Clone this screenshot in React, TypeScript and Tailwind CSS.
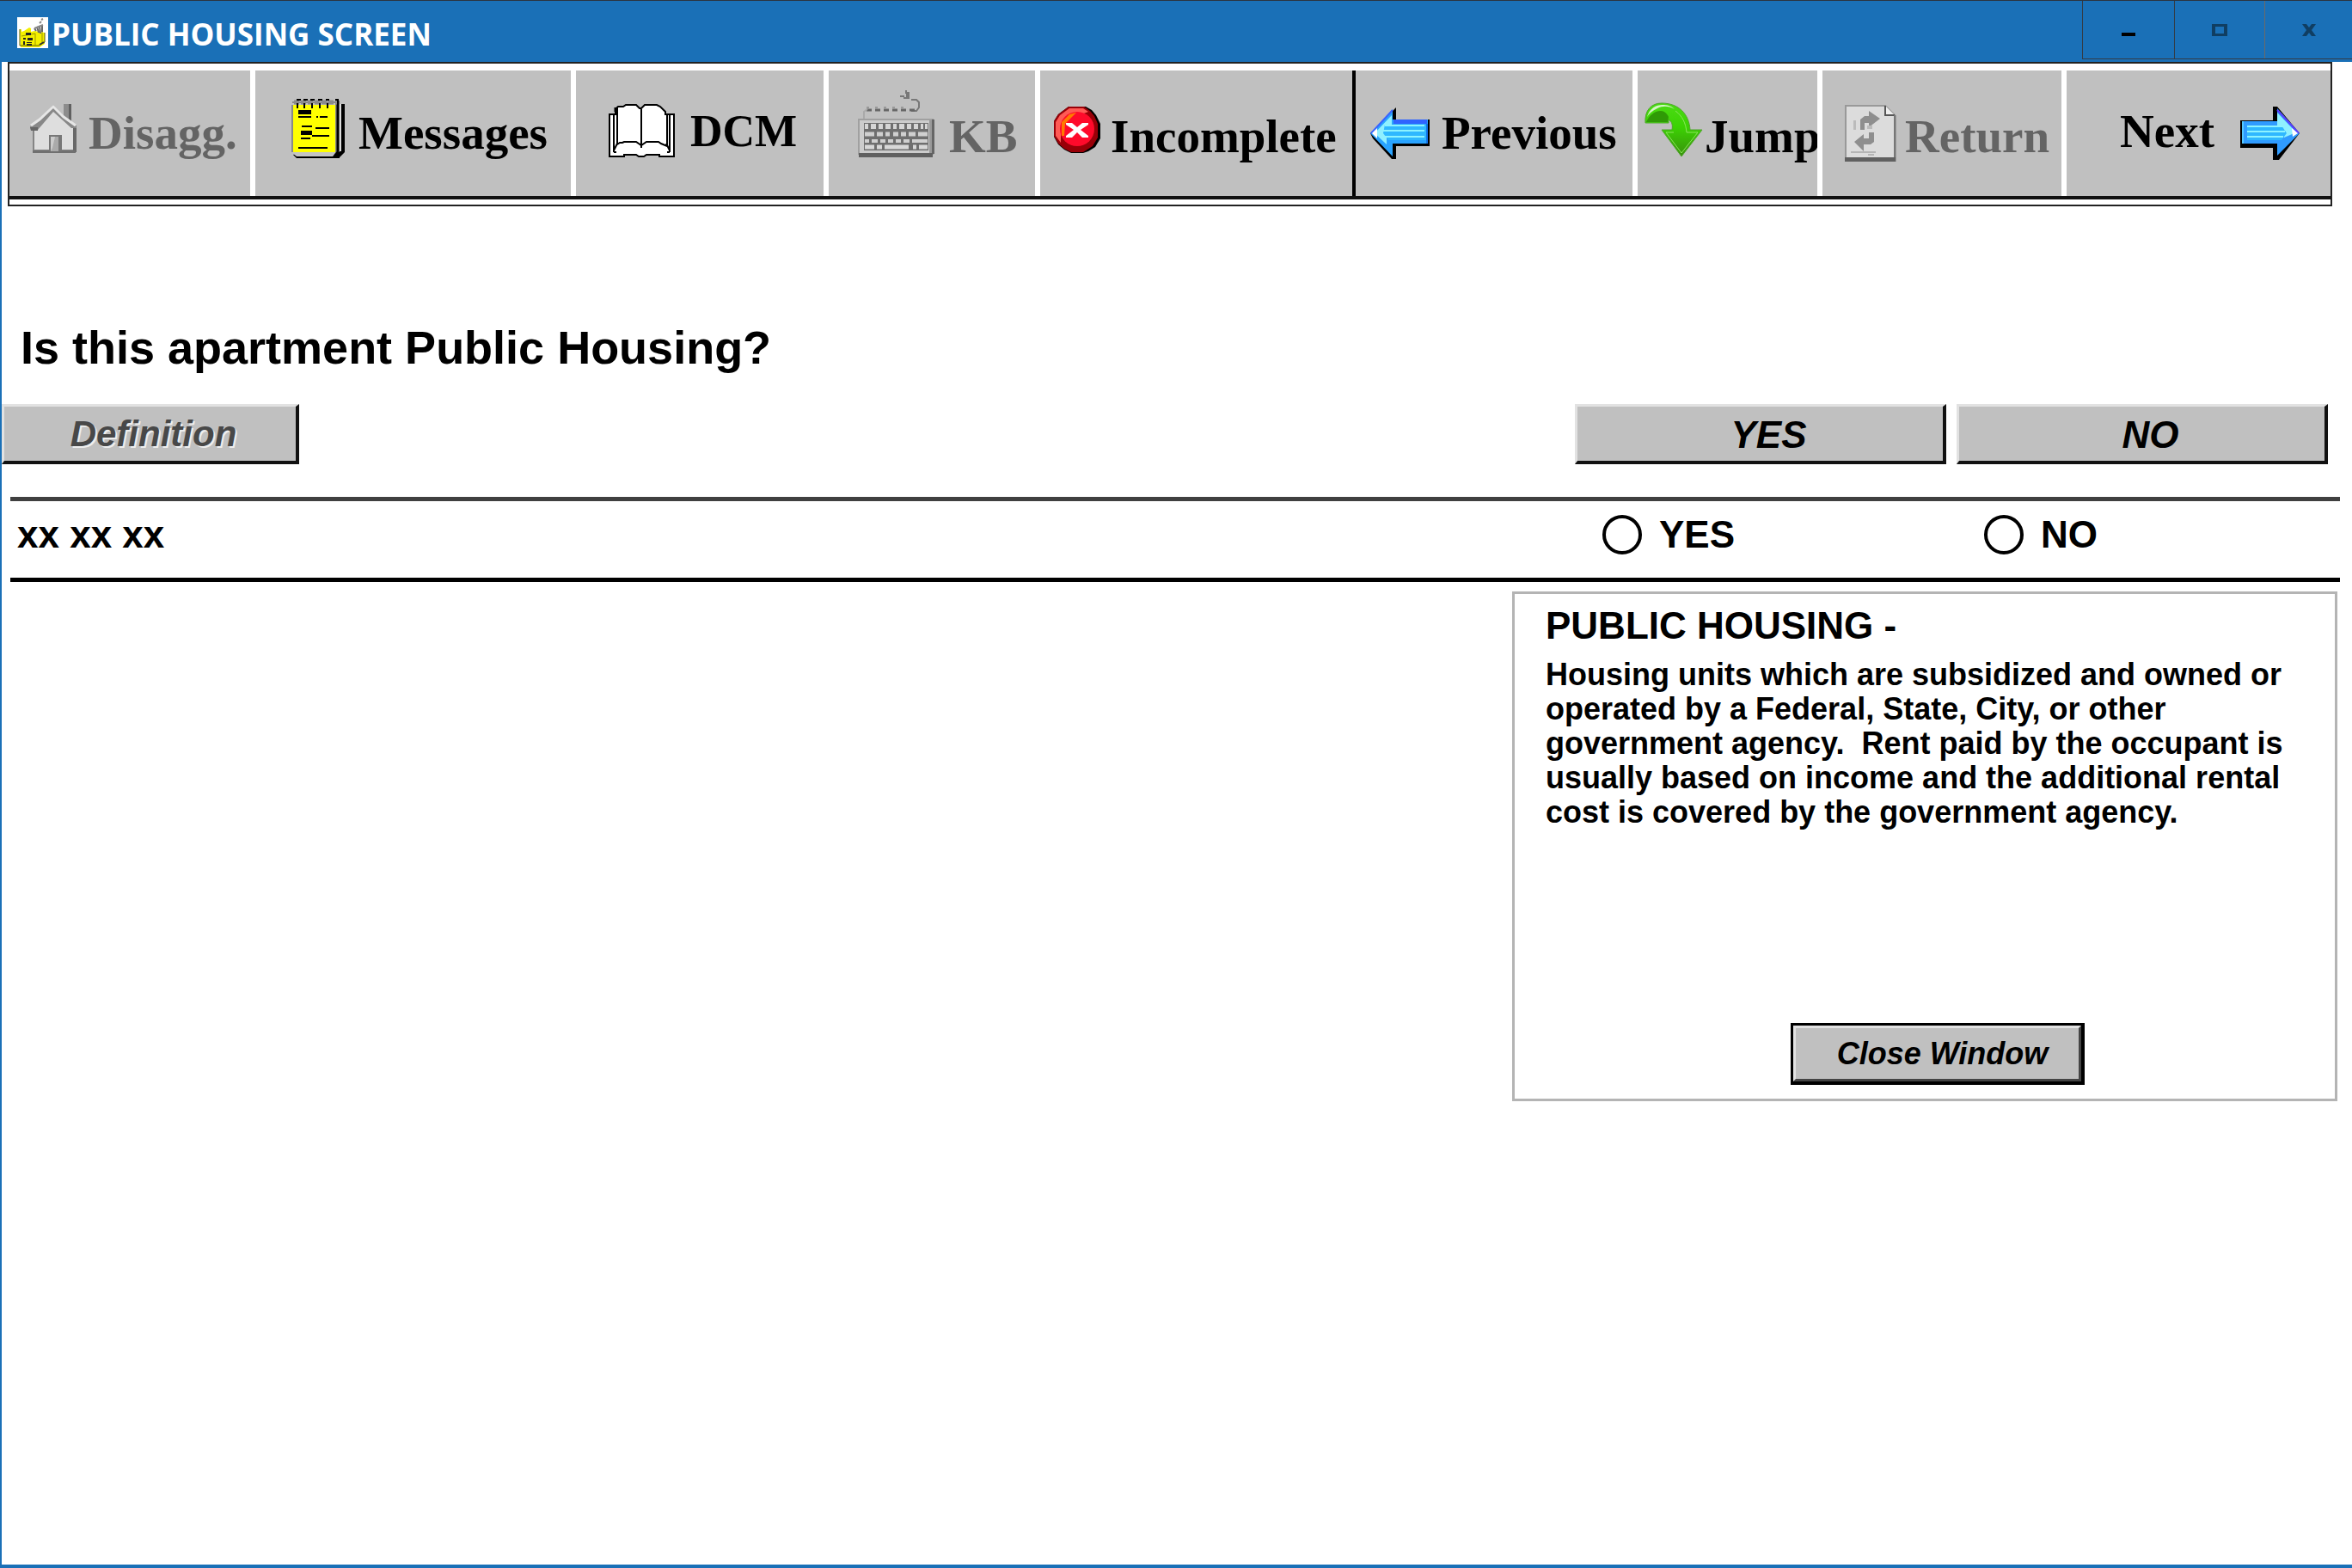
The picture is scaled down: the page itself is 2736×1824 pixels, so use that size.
import React from 'react'

function FactoryIcon() {
  return (
    <svg width="36" height="36" viewBox="0 0 36 36" aria-hidden="true">
      <rect width="36" height="36" fill="#fff" />
      <path d="M3 14h2v3l3-1 6-4 2 1v4l4-1 12 2v13l-6 4H4z" fill="#f4f000" />
      <path d="M3 14v19h22l7-4V18" fill="none" stroke="#5c5a00" strokeWidth="1" />
      <path d="M21 19v14M29 17v13M5 22l16-3" fill="none" stroke="#9a9600" strokeWidth="1" />
      <path d="M10 18h6v3h-6zM7 24h3v2H7zM12 24h6v3h-6zM7 28h2v4H7zM11 29h6v1h-6zM11 31h6v2h-6z" fill="#222" />
      <path d="M20 13l2 3M23 11l2 7M26 10l1 9M29 9v8" fill="none" stroke="#666" strokeWidth="2" />
      <path d="M20 13l5-2 5-2M26 7l2-2M28 3l2-1" fill="none" stroke="#888" strokeWidth="2" />
      <path d="M26 32l5-3" stroke="#333" strokeWidth="2" />
    </svg>
  )
}

function HouseIcon() {
  return (
    <svg className="mb-3 shrink-0" width="56" height="58" viewBox="0 0 56 58" aria-hidden="true">
      <path d="M39 1h8v23l-8-8z" fill="#8c8c8c" />
      <path d="M45 1h3v24l-3-3z" fill="#606060" />
      <path d="M4 30L27 8l24 22v25H4z" fill="#dedede" />
      <path d="M4 30v26M4 55h46" stroke="#858585" strokeWidth="2" />
      <path d="M50 28h4v29h-4z" fill="#686868" />
      <path d="M3 55h50v3H3z" fill="#707070" />
      <path d="M0 27L10 20 27 2l13 13 14 11v3h-6L27 10 9 31H1z" fill="#888" />
      <path d="M1 26L11 19 27 4l12 12 14 10" fill="none" stroke="#e6e6e6" strokeWidth="3" />
      <path d="M0 28h9v4H1z" fill="#666" />
      <path d="M22 37h15v19H22z" fill="#777" />
      <path d="M24 39h9v17h-9z" fill="#aaa" />
      <path d="M24 39h5l-3 13-2 4z" fill="#ccc" />
    </svg>
  )
}

function NotepadIcon() {
  return (
    <svg className="mb-3 shrink-0" width="62" height="70" viewBox="0 0 62 70" aria-hidden="true">
      <path d="M8 63h48V7h6v56l-6 6v1H6l-4-4z" fill="#000" />
      <path d="M1 5h51v58l-4 5H6l-5-4z" fill="#c4c4c4" />
      <path d="M1 5h51v62" fill="none" stroke="#888" strokeWidth="2" />
      <path d="M54 3v60l-3 4" fill="none" stroke="#000" strokeWidth="3" />
      <path d="M57 7v55" stroke="#ddd" strokeWidth="2" />
      <path d="M1 8h50v55H1z" fill="#ff0" />
      <path d="M1 8v55" stroke="#888" strokeWidth="2" />
      <path d="M3 5h50" stroke="#8a8a8a" strokeWidth="5" strokeDasharray="6 2" />
      <path d="M6 2h5M14 2h5M22 2h5M31 2h5M40 2h4M51 2h4M7 6v6M15 6v6M24 6v6M33 6v6M42 6v6" stroke="#000" strokeWidth="2" />
      <path d="M8 14h15v5H8zM8 21h15v2H8zM29 21h2v2h-2zM33 21h9v2h-9zM12 32h12v2H12zM28 34h16v2H28zM11 38h13v5H11zM24 43h20v2H24zM11 46h11v2H11zM8 57h34v2H8z" fill="#000" />
    </svg>
  )
}

function BookIcon() {
  return (
    <svg className="mb-1 shrink-0" width="77" height="64" viewBox="0 0 77 64" aria-hidden="true">
      <path d="M1 12h7V6l3-3h6l3-2h12l4 4h2l4-4h14l4 2 6 6v3h10v49H59v-2H44l-3 2h-6l-3-2H18v2H1z" fill="#fff" stroke="#000" strokeWidth="2" />
      <path d="M10 4v43l3-2h3l2-1h14l6 4 6-4h14l3 2 7 3V11M38 6v45M6 13v43M71 13v43M6 54l4-8M71 54l-4-8M6 56h3M68 56h3" fill="none" stroke="#000" strokeWidth="2" />
      <path d="M8 4v5" stroke="#000" strokeWidth="3" />
    </svg>
  )
}

function KeyboardIcon() {
  return (
    <svg className="mb-6 shrink-0" width="90" height="79" viewBox="0 0 90 79" aria-hidden="true">
      <path d="M56 1v4M49 8h5M62 12h6l3 3v6l-3 4h-6" fill="none" stroke="#777" strokeWidth="2" />
      <path d="M56 3h4v8h-7v-2h3z" fill="#777" />
      <path d="M10 24h56" stroke="#666" strokeWidth="3" strokeDasharray="6 4" />
      <path d="M10 21h50" stroke="#999" strokeWidth="2" strokeDasharray="3 7" />
      <path d="M7 34v-8l4-3" fill="none" stroke="#aaa" strokeWidth="2" />
      <path d="M1 35h86v40H1z" fill="#ccc" stroke="#a0a0a0" strokeWidth="2" />
      <path d="M83 36h3v39h-3z" fill="#999" />
      <path d="M86 35h3v40h-3z" fill="#666" />
      <path d="M1 74h86v5H1z" fill="#606060" />
      <path d="M7 39h75v32H7z" fill="#6f6f6f" />
      <path d="M8 43h4M15 43h6M24 43h5M32 43h6M41 43h4M48 43h6M57 43h5M65 43h5M73 43h3M78 43h3" stroke="#d6d6d6" strokeWidth="6" />
      <path d="M8 52h11M22 52h7M32 52h5M41 52h6M50 52h6M59 52h8M70 52h11" stroke="#d0d0d0" strokeWidth="5" />
      <path d="M8 60h5M16 60h7M26 60h6M35 60h6M44 60h6M53 60h7M63 60h18" stroke="#d0d0d0" strokeWidth="4" />
      <path d="M8 67h11M22 67h6M31 67h28M64 67h4M71 67h10" stroke="#d8d8d8" strokeWidth="5" />
    </svg>
  )
}

function ErrorIcon() {
  return (
    <svg className="mb-2 shrink-0" width="54" height="54" viewBox="0 0 54 54" aria-hidden="true">
      <path d="M17 0h20l7 4 5 6 5 10v17l-6 10-8 5-6 2H20l-8-4-7-6-5-9V17L5 9z" fill="#000" />
      <path d="M17 0h18l7 5 5 6 4 9v16l-6 10-11 7H20l-8-4-7-6-5-9V17L5 9z" fill="#990008" />
      <path d="M18 2h16l6 4-8 3H20L8 20v22l-6-8V18l5-8z" fill="#ff5a55" />
      <circle cx="27" cy="26" r="20" fill="#ff0a2b" />
      <path d="M9 34V18l9-9 8-2-5 5-8 8-1 14z" fill="#ff7a00" />
      <path d="M14 19h7l6 5 6-5h7v2l-9 6 9 7v2h-7l-6-6-6 6h-7v-2l9-7-9-6z" fill="#fff" />
    </svg>
  )
}

function ArrowLeftIcon() {
  return (
    <svg className="shrink-0" width="70" height="60" viewBox="0 0 70 60" aria-hidden="true">
      <path d="M31 0v14h39v31H31v15h-5L4 36 1 30z" fill="#000" />
      <path d="M27 2L1 30l26 27V42h41V14H27z" fill="#29a3ff" />
      <path d="M27 3L2 30" stroke="#3a62ff" strokeWidth="2" />
      <path d="M28 14h39v5H28z" fill="#2f63ff" />
      <path d="M26 9L6 30l14 13V24l6-4z" fill="#8ff0ff" />
      <path d="M3 30l6-6v12z" fill="#fff" />
      <path d="M18 20h48v18H22l-6-8z" fill="#2fb8ff" />
      <path d="M18 21h46M16 27h48M18 34h46" stroke="#8df3ff" strokeWidth="2" />
      <path d="M66 19h2v23h-2z" fill="#1273e8" />
    </svg>
  )
}

function ArrowRightIcon() {
  return (
    <svg className="shrink-0" width="70" height="62" viewBox="0 0 70 62" aria-hidden="true">
      <path d="M38 0h5l26 31-24 31h-7V48H0V16h38z" fill="#000" />
      <path d="M43 2l26 29-26 26V43H2V17h41z" fill="#2f9bff" />
      <path d="M43 4l25 27" stroke="#5a3cff" strokeWidth="2" />
      <path d="M43 7l22 23-14 6-8-14z" fill="#8ff0ff" />
      <path d="M60 25l7 6-6 4z" fill="#fff" />
      <path d="M8 22h40l6 9-6 8H8z" fill="#2fb8ff" />
      <path d="M8 23h42M8 29h44M8 35h42" stroke="#8df3ff" strokeWidth="2" />
      <path d="M2 17h2v26H2z" fill="#55c8ff" />
    </svg>
  )
}

function JumpIcon() {
  return (
    <svg className="mb-2 shrink-0" width="68" height="64" viewBox="0 0 68 64" aria-hidden="true">
      <defs>
        <linearGradient id="jumpBody" x1="0" y1="0" x2="0" y2="1">
          <stop offset="0" stopColor="#4bdc14" />
          <stop offset="0.45" stopColor="#3cd203" />
          <stop offset="1" stopColor="#38900c" />
        </linearGradient>
      </defs>
      <path d="M1 24C0 9 8 1 20 1c20 0 32 13 33 31h14L43 63 20 32h12c1-6 0-9-4-12v4z" fill="url(#jumpBody)" stroke="#4fa52c" strokeWidth="1" />
      <path d="M2 23c3-7 9-13 17-13 4 0 7 3 9 7l-1 6z" fill="#2f9a06" />
      <path d="M3 17C6 7 13 3 21 3c5 0 10 1 14 5-7-4-14-4-20-1C9 10 5 13 3 17z" fill="#d4f5c4" />
      <path d="M36 10c8 6 12 14 13 25h13L43 59 25 35h9" fill="none" stroke="#8be55c" strokeWidth="1" />
    </svg>
  )
}

function ReturnIcon() {
  return (
    <svg className="shrink-0" width="60" height="66" viewBox="0 0 60 66" aria-hidden="true">
      <path d="M1 1h46l12 12v52H1z" fill="#dcdcdc" stroke="#999" strokeWidth="2" />
      <path d="M47 1v11h11" fill="#eee" stroke="#555" strokeWidth="2" />
      <path d="M57 12h2v49h-2z" fill="#777" />
      <path d="M0 61h59v5H0z" fill="#606060" />
      <path d="M28 7l13 9-13 10v-5h-5v8h-5V17l5-4h5z" fill="#8e8e8e" />
      <path d="M10 18h3v11h-3zM26 24h6v4h-6z" fill="#bbb" />
      <path d="M28 32h6v11l-4 3h-8v8L11 43l11-9v5h6z" fill="#8e8e8e" />
      <path d="M7 55h29M27 58h7" stroke="#b4b4b4" strokeWidth="2" />
    </svg>
  )
}

const toolButton = 'flex items-center overflow-hidden whitespace-nowrap bg-[#c0c0c0] text-black disabled:text-[#646464]'
const bevel = 'border-t-3 border-l-3 border-r-4 border-b-4 border-t-[#e2e2e2] border-l-[#e2e2e2] border-r-[#111111] border-b-[#111111] bg-[#c0c0c0] font-bold italic'

export default function App() {
  return (
    <div className="flex min-h-screen flex-col border-b-4 border-l-2 border-[#1a70b7] bg-white font-['Liberation_Sans',Arial,sans-serif] text-black">
      <header className="-ml-[2px] flex h-[72px] items-start border-t border-[#2b3440] bg-[#1a70b7]">
        <div className="flex items-center gap-1 pt-[17px] pl-5">
          <FactoryIcon />
          <h1 className="pt-1 font-['Open_Sans','Noto_Sans',sans-serif] text-[35px] leading-[36px] font-bold text-white">PUBLIC HOUSING SCREEN</h1>
        </div>
        <div className="ml-auto flex h-[68px] border-b border-[#333c46]">
          <button aria-label="Minimize" className="flex w-[107px] items-center justify-center border-l border-[#333c46]">
            <svg width="16" height="14" viewBox="0 0 16 14"><path d="M0 10h16v4H0z" fill="#000" /></svg>
          </button>
          <button aria-label="Maximize" className="flex w-[105px] items-center justify-center border-l border-[#333c46]">
            <svg width="18" height="14" viewBox="0 0 18 14"><path d="M0 0h18v14H0zM4 3v8h10V3z" fill="#103e62" fillRule="evenodd" /></svg>
          </button>
          <button aria-label="Close" className="flex w-[102px] items-center justify-center border-l border-[#6a6a6a]">
            <svg width="16" height="14" viewBox="0 0 16 14"><path d="M0 0h5l3 4 3-4h5l-5 7 5 7h-5l-3-4-3 4H0l5-7z" fill="#103e62" /></svg>
          </button>
        </div>
      </header>

      <nav className="mr-[23px] ml-[7px] border-2 border-[#222222] pt-2 pb-[6px]">
        <div className="grid h-[150px] grid-cols-[286fr_373fr_294fr_246fr_367fr_328fr_215fr_284fr_307fr] border-b-4 border-[#111111] font-['Liberation_Serif','Times_New_Roman',serif] text-[55px] leading-[60px] font-bold">
          <button disabled className={`${toolButton} gap-3 border-r-6 border-white pl-6`}>
            <HouseIcon />
            <span>Disagg.</span>
          </button>
          <button className={`${toolButton} gap-4 border-r-6 border-white pl-[42px]`}>
            <NotepadIcon />
            <span>Messages</span>
          </button>
          <button className={`${toolButton} gap-[18px] border-r-6 border-white pl-[38px] text-[52px]`}>
            <BookIcon />
            <span className="pb-1">DCM</span>
          </button>
          <button disabled className={`${toolButton} gap-4 border-r-6 border-white pl-[34px]`}>
            <KeyboardIcon />
            <span className="pt-2">KB</span>
          </button>
          <button className={`${toolButton} gap-3 border-r-4 border-black pl-4`}>
            <ErrorIcon />
            <span className="pt-2">Incomplete</span>
          </button>
          <button className={`${toolButton} gap-[14px] border-r-6 border-white pl-4`}>
            <ArrowLeftIcon />
            <span>Previous</span>
          </button>
          <button className={`${toolButton} gap-[2px] border-r-6 border-white pl-2`}>
            <JumpIcon />
            <span className="pt-2">Jump</span>
          </button>
          <button disabled className={`${toolButton} gap-[10px] border-r-6 border-white pl-[26px]`}>
            <ReturnIcon />
            <span className="pt-2">Return</span>
          </button>
          <button className={`${toolButton} gap-[30px] pl-[62px]`}>
            <span className="pb-1">Next</span>
            <ArrowRightIcon />
          </button>
        </div>
      </nav>

      <main>
        <h2 className="mt-[134px] pl-[22px] text-[54px] leading-[60px] font-bold">Is this apartment Public Housing?</h2>

        <div className="mt-9 mr-7 flex gap-3 text-[44px]">
          <button disabled className={`${bevel} h-[70px] w-[346px] pl-2 text-[42px] text-[#484848] [text-shadow:2px_2px_0_#eeeeee]`}>Definition</button>
          <button className={`${bevel} ml-auto h-[70px] w-[432px] pl-5`}>YES</button>
          <button className={`${bevel} h-[70px] w-[432px] pl-5`}>NO</button>
        </div>

        <div className="mt-[38px] mr-[14px] ml-[10px] flex h-[99px] items-center border-t-5 border-b-5 border-t-[#404040] border-b-black pb-3 pl-2 text-[44px] leading-[50px] font-bold">
          <span className="flex-1">xx xx xx</span>
          <label className="flex w-[444px] items-center gap-5">
            <input type="radio" name="publicHousing" value="yes" className="size-[46px] appearance-none rounded-full border-4 border-black bg-white checked:bg-black" />
            YES
          </label>
          <label className="flex w-[414px] items-center gap-5">
            <input type="radio" name="publicHousing" value="no" className="size-[46px] appearance-none rounded-full border-4 border-black bg-white checked:bg-black" />
            NO
          </label>
        </div>

        <section className="mt-[11px] mr-[17px] ml-auto flex h-[593px] w-[960px] flex-col border-3 border-[#b4b4b4] pt-3 pb-4 pl-9">
          <h3 className="text-[44px] leading-[50px] font-bold">PUBLIC HOUSING -</h3>
          <p className="mt-3 text-[36px] leading-[40px] font-bold whitespace-nowrap">
            Housing units which are subsidized and owned or<br />
            operated by a Federal, State, City, or other<br />
            government agency.&nbsp; Rent paid by the occupant is<br />
            usually based on income and the additional rental<br />
            cost is covered by the government agency.
          </p>
          <div className="mt-auto ml-[285px] flex w-[342px] border-3 border-r-4 border-b-4 border-black">
            <button className="h-[65px] flex-1 border-3 border-t-[#e2e2e2] border-r-[#444444] border-b-[#444444] border-l-[#e2e2e2] bg-[#c0c0c0] pl-3 text-[36px] leading-[40px] font-bold italic">Close Window</button>
          </div>
        </section>
      </main>
    </div>
  )
}
